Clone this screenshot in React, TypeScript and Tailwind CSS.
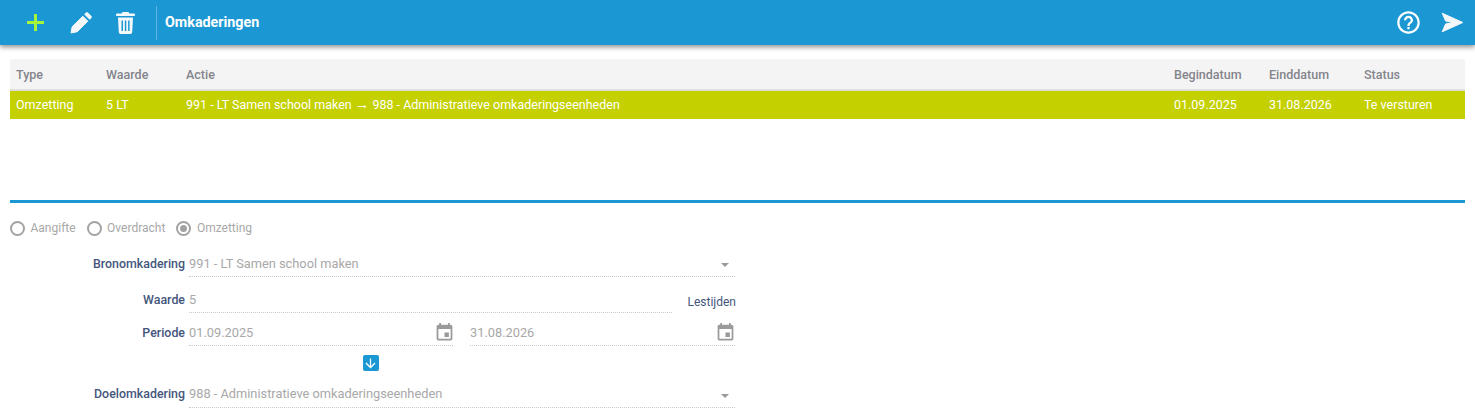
import { MdArrowDownward, MdEvent, MdHelpOutline } from "react-icons/md"

const columns = [
  { key: "type", label: "Type", value: "Omzetting", className: "w-[90px]" },
  { key: "waarde", label: "Waarde", value: "5 LT", className: "w-[80px]" },
  {
    key: "actie",
    label: "Actie",
    value: (
      <>
        991 - LT Samen school maken <span className="text-[14.5px] leading-none">→</span> 988 - Administratieve omkaderingseenheden
      </>
    ),
    className: "flex-1",
  },
  { key: "begin", label: "Begindatum", value: "01.09.2025", className: "w-[95px]" },
  { key: "eind", label: "Einddatum", value: "31.08.2026", className: "w-[95px]" },
  { key: "status", label: "Status", value: "Te versturen", className: "w-[101px]" },
]

function Radio({ label, checked }: { label: string; checked?: boolean }) {
  return (
    <label className="flex items-center gap-[5.5px]">
      <span className="w-[15px] h-[15px] rounded-full border-2 border-[#a3a3a3] flex items-center justify-center">
        {checked && <span className="w-[7px] h-[7px] rounded-full bg-[#a3a3a3]" />}
      </span>
      <span>{label}</span>
    </label>
  )
}

function Caret() {
  return <span className="w-0 h-0 mr-[6px] mt-[3px] border-x-[4px] border-x-transparent border-t-[4px] border-t-[#9a9a9a]" />
}

function Label({ children }: { children: string }) {
  return <span className="w-[175px] shrink-0 text-right text-[12.4px] font-medium text-[#44567c]">{children}</span>
}

function Pencil() {
  return (
    <svg width="22" height="22" viewBox="0 0 22 22" fill="#f5f8fa" stroke="#f5f8fa" strokeWidth="1" strokeLinejoin="round">
      <path d="M1 21l1.2-6.3L12.8 4.2l5 5L7.3 19.7z" />
      <path d="M14.7 2.3l1.2-1.2a1.4 1.4 0 0 1 2 0l3 3a1.4 1.4 0 0 1 0 2l-1.2 1.2z" />
    </svg>
  )
}

function Trash() {
  return (
    <svg width="19" height="22" viewBox="0 0 19 22" fill="#f5f8fa">
      <path d="M6.5 0h6l.8 1.6H18a1 1 0 0 1 0 2.4H1a1 1 0 0 1 0-2.4h4.7z" />
      <path
        fillRule="evenodd"
        d="M2 5.5h15l-.8 14.7a1.9 1.9 0 0 1-1.9 1.8H4.7a1.9 1.9 0 0 1-1.9-1.8zM5.5 8.5v10.5H7V8.5zm3.3 0v10.5h1.5V8.5zm3.3 0v10.5h1.5V8.5z"
      />
    </svg>
  )
}

function Send() {
  return (
    <svg width="23" height="21" viewBox="0 0 23 21" fill="#f5f8fa" stroke="#f5f8fa" strokeWidth="1" strokeLinejoin="round">
      <path d="M1.2 1.2L21.8 10.5 1.2 19.8 4.6 12l7.4-1.5-7.4-1.5z" />
    </svg>
  )
}

export default function App() {
  return (
    <div className="w-[1475px] h-[415px] overflow-hidden bg-white text-[12px] font-['Roboto','Liberation_Sans',sans-serif]">
      {/* toolbar */}
      <div className="h-[45px] bg-[#1b98d3] flex items-center shadow-[0_2px_5px_rgba(0,0,0,0.45)] text-white relative">
        <svg className="ml-[26px]" width="19" height="19" viewBox="0 0 19 19" fill="#a4f53c">
          <path d="M8 1h3v7h7v3h-7v7H8v-7H1V8h7z" />
        </svg>
        <span className="ml-[25px]"><Pencil /></span>
        <span className="ml-[24px]"><Trash /></span>
        <span className="ml-[21px] w-px h-[34px] bg-[#5cb6e0]" />
        <span className="ml-[8px] text-[14.3px] font-bold">Omkaderingen</span>
        <span className="ml-auto flex items-center">
          <MdHelpOutline size={27} />
          <span className="ml-[19px] mr-[11px]"><Send /></span>
        </span>
      </div>

      {/* table */}
      <div className="mt-[14px] mx-[10px] text-[12.5px]">
        <div className="h-[32px] flex items-center pl-[6px] pt-[2px] bg-[#f4f4f4] border-b-2 border-[#dddddd] rounded-t-[2px] font-medium text-[#84848c]">
          {columns.map((col) => (
            <span key={col.key} className={col.className}>{col.label}</span>
          ))}
        </div>
        <div className="h-[28px] flex items-center pl-[6px] bg-[#c4d000] text-white">
          {columns.map((col) => (
            <span key={col.key} className={col.className}>{col.value}</span>
          ))}
        </div>
      </div>

      <div className="mt-[81px] mx-[10px] h-[3px] bg-[#1b98d3]" />

      {/* form */}
      <div className="pl-[10px] pt-[17px] text-[#a8a8a8]">
        <div className="flex items-center gap-[11px] h-[16px]">
          <Radio label="Aangifte" />
          <Radio label="Overdracht" />
          <Radio label="Omzetting" checked />
        </div>

        <div className="w-[725px] text-[12.8px]">
          <div className="flex items-center mt-[15px]">
            <Label>Bronomkadering</Label>
            <div className="ml-[4px] flex-1 h-[26px] flex items-center justify-between border-b border-dotted border-[#c8c8c8]">
              <span>991 - LT Samen school maken</span>
              <Caret />
            </div>
          </div>

          <div className="flex items-center mt-[10px]">
            <Label>Waarde</Label>
            <div className="ml-[4px] w-[483px] h-[26px] flex items-center border-b border-dotted border-[#c8c8c8]">5</div>
            <span className="ml-auto mt-[3px] -mr-[1px] text-[12px] text-[#44567c]">Lestijden</span>
          </div>

          <div className="flex items-center mt-[7px]">
            <Label>Periode</Label>
            <div className="ml-[4px] w-[264px] h-[26px] flex items-center justify-between border-b border-dotted border-[#c8c8c8]">
              <span>01.09.2025</span>
              <MdEvent size={21} className="text-[#9a9a9a] mr-[-2px]" />
            </div>
            <div className="ml-auto w-[265px] h-[26px] flex items-center justify-between border-b border-dotted border-[#c8c8c8]">
              <span>31.08.2026</span>
              <MdEvent size={21} className="text-[#9a9a9a] mr-[-1px]" />
            </div>
          </div>

          <div className="flex justify-center mt-[9px]">
            <span className="ml-[-4px] w-[16px] h-[16px] rounded-[2px] bg-[#1b98d3] text-white flex items-center justify-center">
              <MdArrowDownward size={15} />
            </span>
          </div>

          <div className="flex items-center mt-[10px]">
            <Label>Doelomkadering</Label>
            <div className="ml-[4px] flex-1 h-[27px] flex items-center justify-between border-b border-dotted border-[#c8c8c8]">
              <span>988 - Administratieve omkaderingseenheden</span>
              <Caret />
            </div>
          </div>
        </div>
      </div>
    </div>
  )
}
